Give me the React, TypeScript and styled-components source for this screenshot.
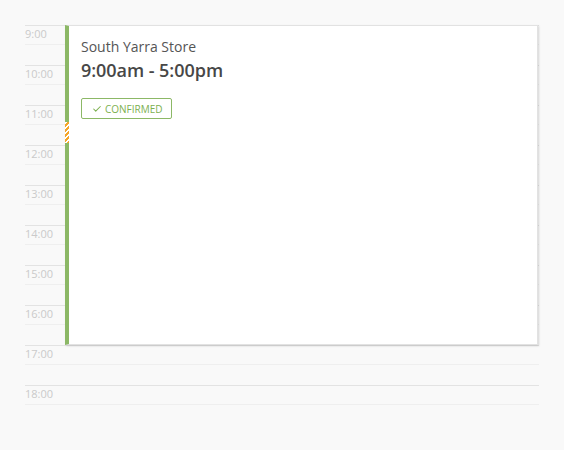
import React from 'react';
import styled, { createGlobalStyle } from 'styled-components';
import { Check } from 'lucide-react';

const GlobalStyle = createGlobalStyle`
  * {
    box-sizing: border-box;
    margin: 0;
    padding: 0;
  }

  body {
    background: #f9f9f9;
    font-family: "Open Sans", "Liberation Sans", sans-serif;
  }
`;

const Page = styled.div`
  width: 564px;
  height: 450px;
  padding: 25px 25px 0 25px;
`;

const Schedule = styled.div`
  position: relative;
  width: 514px;
`;

const HourRow = styled.div`
  height: 40px;
  border-top: 1px solid #e3e3e3;
  display: flex;
  flex-direction: column;
`;

const HourLabel = styled.span`
  height: 19px;
  font-size: 11px;
  line-height: 15px;
  color: #cacaca;
  border-bottom: 1px solid #efefef;
`;

const Shift = styled.div`
  position: absolute;
  top: 0;
  left: 40px;
  right: 1px;
  height: 320px;
  background: #fff;
  border: 1px solid #e2e2e2;
  border-left: 4px solid #8cb866;
  box-shadow: 1px 1px 2px rgba(0, 0, 0, 0.15);
  padding: 11px 12px;
`;

const Hatch = styled.div`
  position: absolute;
  left: -4px;
  top: 96px;
  width: 4px;
  height: 21px;
  background: repeating-linear-gradient(
    -45deg,
    #f4a62a 0 2px,
    #fff 2px 3.5px
  );
`;

const Location = styled.div`
  font-size: 14px;
  line-height: 19px;
  color: #555;
`;

const Hours = styled.div`
  margin-top: 2px;
  font-size: 18px;
  line-height: 24px;
  font-weight: 600;
  letter-spacing: -0.05px;
  color: #474747;
`;

const Status = styled.div`
  margin-top: 16px;
  display: inline-flex;
  align-items: center;
  gap: 3px;
  height: 21px;
  padding: 0 8px 0 10px;
  border: 1px solid #8cb866;
  border-radius: 2px;
  color: #7cb04f;
  font-size: 10px;
  text-transform: uppercase;
`;

const hours = ['9:00', '10:00', '11:00', '12:00', '13:00', '14:00', '15:00', '16:00', '17:00', '18:00'];

export default function App() {
  return (
    <Page>
      <GlobalStyle />
      <Schedule>
        {hours.map((h) => (
          <HourRow key={h}>
            <HourLabel>{h}</HourLabel>
          </HourRow>
        ))}
        <Shift>
          <Hatch />
          <Location>South Yarra Store</Location>
          <Hours>9:00am - 5:00pm</Hours>
          <Status>
            <Check size={10} strokeWidth={2.5} />
            Confirmed
          </Status>
        </Shift>
      </Schedule>
    </Page>
  );
}
